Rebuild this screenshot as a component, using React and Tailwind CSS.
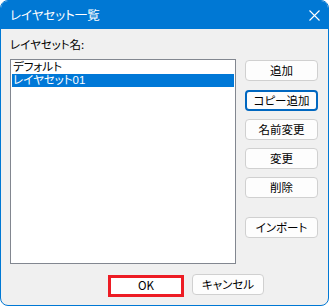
import React from "react";

function Btn({ children, focused, className = "" }) {
  return (
    <div
      className={
        "flex items-center justify-center w-[73px] h-[21px] rounded-[4px] bg-[#fdfdfd] text-[11.5px] text-black leading-none " +
        (focused ? "border-2 border-[#0067c0] " : "border border-[#d0d0d0] ") +
        className
      }
    >
      {children}
    </div>
  );
}

export default function App() {
  return (
    <div className="w-[329px] h-[306px] bg-white [font-family:'Noto_Sans_CJK_JP',sans-serif] [font-feature-settings:'palt']">
      <div className="w-full h-full flex flex-col rounded-t-[8px] rounded-b-[8px] border border-[#0078d4] overflow-hidden bg-[#f0f0f0]">
        <div className="h-[28px] shrink-0 bg-[#0078d4] flex items-center justify-between pl-[9px] pr-[8px] text-white text-[12.5px] leading-none">
          <span>レイヤセット一覧</span>
          <svg width="11" height="11" viewBox="0 0 11 11">
            <path d="M0.5 0.5 L10.5 10.5 M10.5 0.5 L0.5 10.5" stroke="white" strokeWidth="1.1" />
          </svg>
        </div>
        <div className="flex-1 flex flex-col pl-[9px]">
          <div className="mt-[7px] h-[16px] text-[11.5px] leading-[16px] text-black">レイヤセット名:</div>
          <div className="mt-[7px] flex">
            <div className="w-[226px] h-[205px] border border-[#828790] bg-white p-px text-[11.5px] [font-family:'Liberation_Sans','Noto_Sans_CJK_JP',sans-serif]">
              <div className="h-[13px] leading-[13px] pl-px text-black">デフォルト</div>
              <div className="h-[13px] leading-[13px] bg-[#0078d7] pl-px text-white">レイヤセット01</div>
            </div>
            <div className="ml-[9px] flex flex-col">
              <Btn className="mt-px">追加</Btn>
              <Btn focused className="mt-[9px]">コピー追加</Btn>
              <Btn className="mt-[8px]">名前変更</Btn>
              <Btn className="mt-[8px]">変更</Btn>
              <Btn className="mt-[8px]">削除</Btn>
              <Btn className="mt-[19px]">インポート</Btn>
            </div>
          </div>
          <div className="mt-[11px] flex pl-[98px] items-start">
            <div className="w-[76px] h-[22px] border-[3px] border-[#ed1c24] bg-white flex items-center justify-center text-[11.5px] leading-none text-black">
              OK
            </div>
            <div className="ml-[8px] -mt-px flex items-center justify-center w-[72px] h-[21px] rounded-[4px] bg-[#fdfdfd] border border-[#d0d0d0] text-[11.5px] leading-none text-black">
              キャンセル
            </div>
          </div>
        </div>
      </div>
    </div>
  );
}
